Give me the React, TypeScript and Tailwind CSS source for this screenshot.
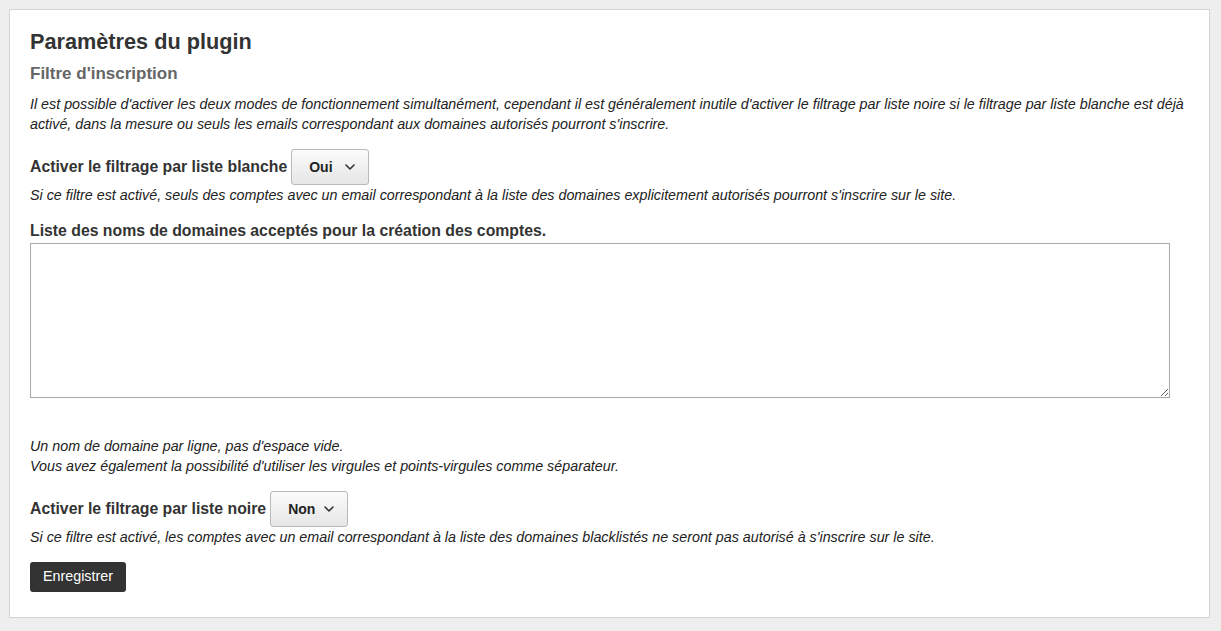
import React from 'react';

function Chevron() {
  return (
    <svg width="10" height="6" viewBox="0 0 10 6" fill="none" className="ml-auto">
      <path d="M1 1l4 4 4-4" stroke="#333" strokeWidth="1.6" strokeLinecap="round" strokeLinejoin="round" />
    </svg>
  );
}

function FakeSelect({ value }: { value: string }) {
  return (
    <div className="ml-[4px] flex h-[36px] w-[78px] items-center rounded-[3px] border border-[#b9b9b9] bg-gradient-to-b from-[#fbfbfb] to-[#e6e6e6] pl-[17px] pr-[13px] text-[14px] font-bold text-[#222]">
      <span>{value}</span>
      <Chevron />
    </div>
  );
}

export default function App() {
  return (
    <div className="min-h-screen bg-[#eeeeee] pt-[9px] pl-[9px] font-['Liberation_Sans',Arial,sans-serif] text-[#333]">
      <div className="w-[1201px] border border-[#d3d3d3] bg-white px-[20px] pt-[19px] pb-[25px]">
        <h1 className="text-[21.7px] font-bold leading-[26px]">Paramètres du plugin</h1>
        <h2 className="mt-[9px] text-[17px] font-bold leading-[20px] text-[#666]">Filtre d'inscription</h2>
        <p className="mt-[10px] text-[14.3px] italic leading-[20px] text-[#222]">
          Il est possible d'activer les deux modes de fonctionnement simultanément, cependant il est généralement inutile d'activer le filtrage par liste noire si le filtrage par liste blanche est déjà activé, dans la mesure ou seuls les emails correspondant aux domaines autorisés pourront s'inscrire.
        </p>

        <div className="mt-[15px] flex items-center">
          <label className="text-[15.8px] font-bold">Activer le filtrage par liste blanche</label>
          <FakeSelect value="Oui" />
        </div>
        <p className="text-[14.3px] italic leading-[20px] text-[#222]">
          Si ce filtre est activé, seuls des comptes avec un email correspondant à la liste des domaines explicitement autorisés pourront s'inscrire sur le site.
        </p>

        <label className="mt-[16px] block text-[15.8px] font-bold leading-[20px]">
          Liste des noms de domaines acceptés pour la création des comptes.
        </label>
        <textarea className="mt-[2px] block h-[155px] w-[1140px] border border-[#a9a9a9] bg-white" />

        <p className="mt-[38px] text-[14.3px] italic leading-[20px] text-[#222]">
          Un nom de domaine par ligne, pas d'espace vide.
          <br />
          Vous avez également la possibilité d'utiliser les virgules et points-virgules comme séparateur.
        </p>

        <div className="mt-[15px] flex items-center">
          <label className="text-[15.8px] font-bold">Activer le filtrage par liste noire</label>
          <FakeSelect value="Non" />
        </div>
        <p className="text-[14.3px] italic leading-[20px] text-[#222]">
          Si ce filtre est activé, les comptes avec un email correspondant à la liste des domaines blacklistés ne seront pas autorisé à s'inscrire sur le site.
        </p>

        <button className="mt-[15px] h-[30px] rounded-[3px] bg-[#333] px-[13px] text-[14.3px] text-white">
          Enregistrer
        </button>
      </div>
    </div>
  );
}
